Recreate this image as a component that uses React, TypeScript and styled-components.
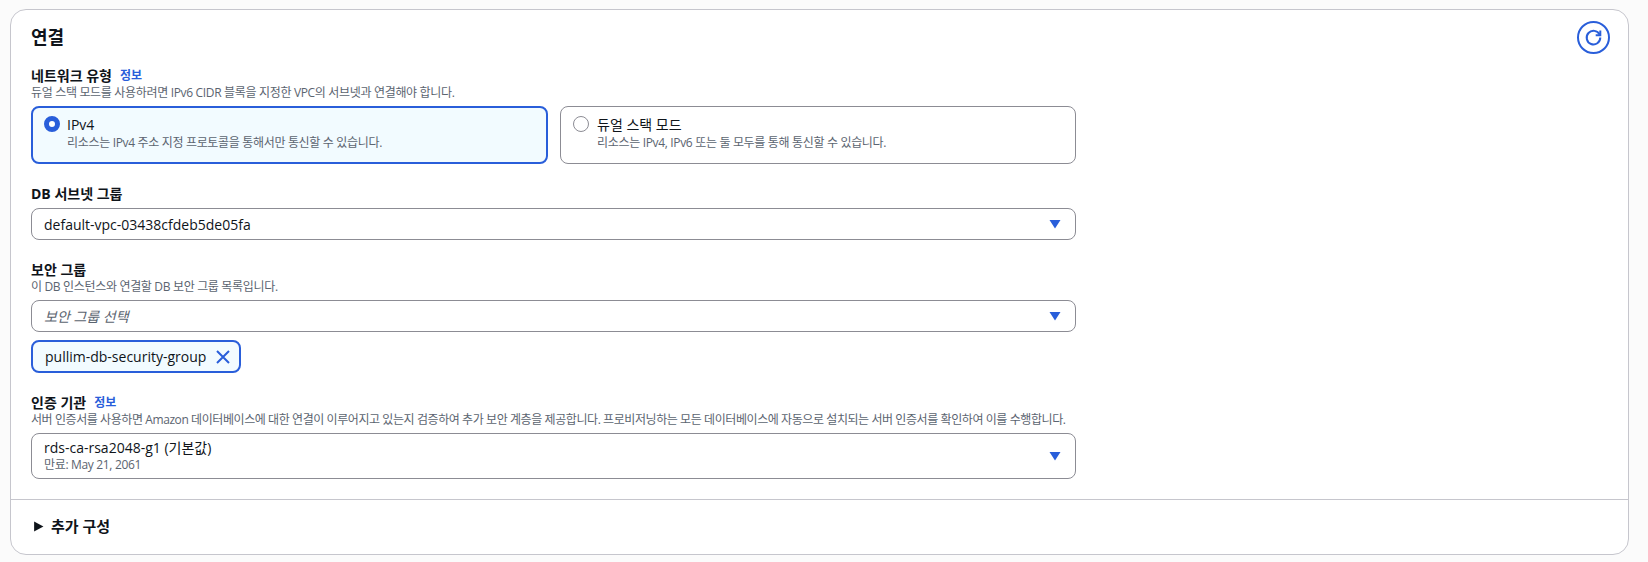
import * as React from "react";
import styled, { createGlobalStyle } from "styled-components";

const GlobalStyle = createGlobalStyle`
  html, body {
    margin: 0;
    padding: 0;
    background: #fbfbfb;
    color: #0f141a;
    font-family: "Open Sans", "Noto Sans CJK KR", sans-serif;
  }
`;

const Page = styled.div`
  width: 1648px;
  height: 562px;
  padding: 9px 19px 7px 10px;
  box-sizing: border-box;
`;

const Card = styled.section`
  height: 100%;
  box-sizing: border-box;
  background: #fff;
  border: 1px solid #c6c6cd;
  border-radius: 16px;
  display: flex;
  flex-direction: column;
`;

const Body = styled.div`
  padding: 13px 20px 20px 20px;
  position: relative;
`;

const Title = styled.h2`
  margin: 0 0 16px;
  font-size: 18px;
  line-height: 28px;
  font-weight: 700;
`;

const RefreshButton = styled.button`
  position: absolute;
  top: 11px;
  right: 18px;
  width: 33px;
  height: 33px;
  padding: 0;
  border: 2px solid #295eda;
  border-radius: 50%;
  background: #fff;
  color: #295eda;
  display: flex;
  align-items: center;
  justify-content: center;
`;

const Field = styled.div<{ $gap?: number }>`
  margin-bottom: ${(p) => p.$gap ?? 21}px;
`;

const Label = styled.div`
  display: flex;
  align-items: center;
  gap: 8px;
  font-size: 14px;
  line-height: 18px;
  font-weight: 700;
`;

const InfoLink = styled.a`
  font-size: 12px;
  font-weight: 700;
  color: #295eda;
`;

const Hint = styled.div<{ $tight?: boolean }>`
  font-size: 12px;
  line-height: 16px;
  letter-spacing: ${(p) => (p.$tight ? "-0.42px" : "-0.33px")};
  color: #5b6470;
  white-space: nowrap;
`;

const Tiles = styled.div`
  display: grid;
  grid-template-columns: 517px 516px;
  column-gap: 12px;
  margin-top: 5px;
`;

const Tile = styled.div<{ $checked?: boolean }>`
  height: 58px;
  box-sizing: border-box;
  padding: ${(p) => (p.$checked ? "7px 11px" : "8px 12px")};
  display: flex;
  gap: ${(p) => (p.$checked ? 7 : 8)}px;
  border-radius: 8px;
  border: ${(p) => (p.$checked ? "2px solid #295eda" : "1px solid #8c8c94")};
  background: ${(p) => (p.$checked ? "#f2fbff" : "#fff")};
`;

const Radio = styled.span<{ $checked?: boolean }>`
  flex: none;
  width: 16px;
  height: 16px;
  margin-top: 1px;
  box-sizing: border-box;
  border-radius: 50%;
  border: ${(p) => (p.$checked ? "5px solid #295eda" : "1px solid #8c8c94")};
  background: #fff;
`;

const TileTitle = styled.div`
  font-size: 14px;
  line-height: 20px;
`;

const Select = styled.div<{ $height?: number }>`
  width: 1045px;
  height: ${(p) => p.$height ?? 32}px;
  box-sizing: border-box;
  margin-top: 5px;
  padding: 0 12px;
  border: 1px solid #8c8c94;
  border-radius: 8px;
  background: #fff;
  display: flex;
  align-items: center;
  justify-content: space-between;
  font-size: 14px;
`;

const Placeholder = styled.span`
  font-style: italic;
  color: #5b6470;
`;

const Caret = styled.svg`
  width: 12px;
  height: 10px;
  fill: #295eda;
  margin-right: 2px;
`;

const Token = styled.div`
  display: inline-flex;
  align-items: center;
  gap: 9px;
  height: 33px;
  box-sizing: border-box;
  margin-top: 8px;
  padding: 0 8px 0 12px;
  border: 2px solid #295eda;
  border-radius: 8px;
  background: #f2fbff;
  font-size: 14px;
`;

const SelectText = styled.div`
  line-height: 18px;
`;

const Divider = styled.hr`
  margin: 0;
  border: 0;
  border-top: 1px solid #c6c6cd;
`;

const Expander = styled.div`
  padding: 16px 20px 17px 22px;
  display: flex;
  align-items: center;
  gap: 7px;
  font-size: 15px;
  line-height: 20px;
  font-weight: 700;
`;

const CaretDown = () => (
  <Caret viewBox="0 0 12 10">
    <path d="M0.5 1h11L6 9.5z" />
  </Caret>
);

export default function App() {
  return (
    <Page>
      <GlobalStyle />
      <Card>
        <Body>
          <Title>연결</Title>
          <RefreshButton aria-label="새로 고침">
            <svg width="21" height="21" viewBox="0 0 21 21" fill="none" stroke="currentColor" strokeWidth="2">
              <path d="M16.6 7.6a6.8 6.8 0 1 0 .7 3" />
              <path d="M17.3 3.6v4.6h-4.6" />
            </svg>
          </RefreshButton>
          <Field>
            <Label>
              네트워크 유형 <InfoLink>정보</InfoLink>
            </Label>
            <Hint>듀얼 스택 모드를 사용하려면 IPv6 CIDR 블록을 지정한 VPC의 서브넷과 연결해야 합니다.</Hint>
            <Tiles>
              <Tile $checked>
                <Radio $checked />
                <div>
                  <TileTitle>IPv4</TileTitle>
                  <Hint>리소스는 IPv4 주소 지정 프로토콜을 통해서만 통신할 수 있습니다.</Hint>
                </div>
              </Tile>
              <Tile>
                <Radio />
                <div>
                  <TileTitle>듀얼 스택 모드</TileTitle>
                  <Hint>리소스는 IPv4, IPv6 또는 둘 모두를 통해 통신할 수 있습니다.</Hint>
                </div>
              </Tile>
            </Tiles>
          </Field>
          <Field>
            <Label>DB 서브넷 그룹</Label>
            <Select>
              default-vpc-03438cfdeb5de05fa
              <CaretDown />
            </Select>
          </Field>
          <Field $gap={21}>
            <Label>보안 그룹</Label>
            <Hint>이 DB 인스턴스와 연결할 DB 보안 그룹 목록입니다.</Hint>
            <Select>
              <Placeholder>보안 그룹 선택</Placeholder>
              <CaretDown />
            </Select>
            <Token>
              pullim-db-security-group
              <svg width="16" height="16" viewBox="0 0 16 16" fill="none" stroke="#295eda" strokeWidth="2">
                <path d="M2 2l12 12M14 2L2 14" />
              </svg>
            </Token>
          </Field>
          <Field $gap={0}>
            <Label>
              인증 기관 <InfoLink>정보</InfoLink>
            </Label>
            <Hint $tight>
              서버 인증서를 사용하면 Amazon 데이터베이스에 대한 연결이 이루어지고 있는지 검증하여 추가 보안 계층을 제공합니다. 프로비저닝하는 모든 데이터베이스에 자동으로 설치되는 서버 인증서를 확인하여 이를 수행합니다.
            </Hint>
            <Select $height={46}>
              <SelectText>
                rds-ca-rsa2048-g1 (기본값)
                <Hint>만료: May 21, 2061</Hint>
              </SelectText>
              <CaretDown />
            </Select>
          </Field>
        </Body>
        <Divider />
        <Expander>
          <svg width="11" height="11" viewBox="0 0 10 10" fill="#0f141a">
            <path d="M1 0.5v9L9.5 5z" />
          </svg>
          추가 구성
        </Expander>
      </Card>
    </Page>
  );
}
